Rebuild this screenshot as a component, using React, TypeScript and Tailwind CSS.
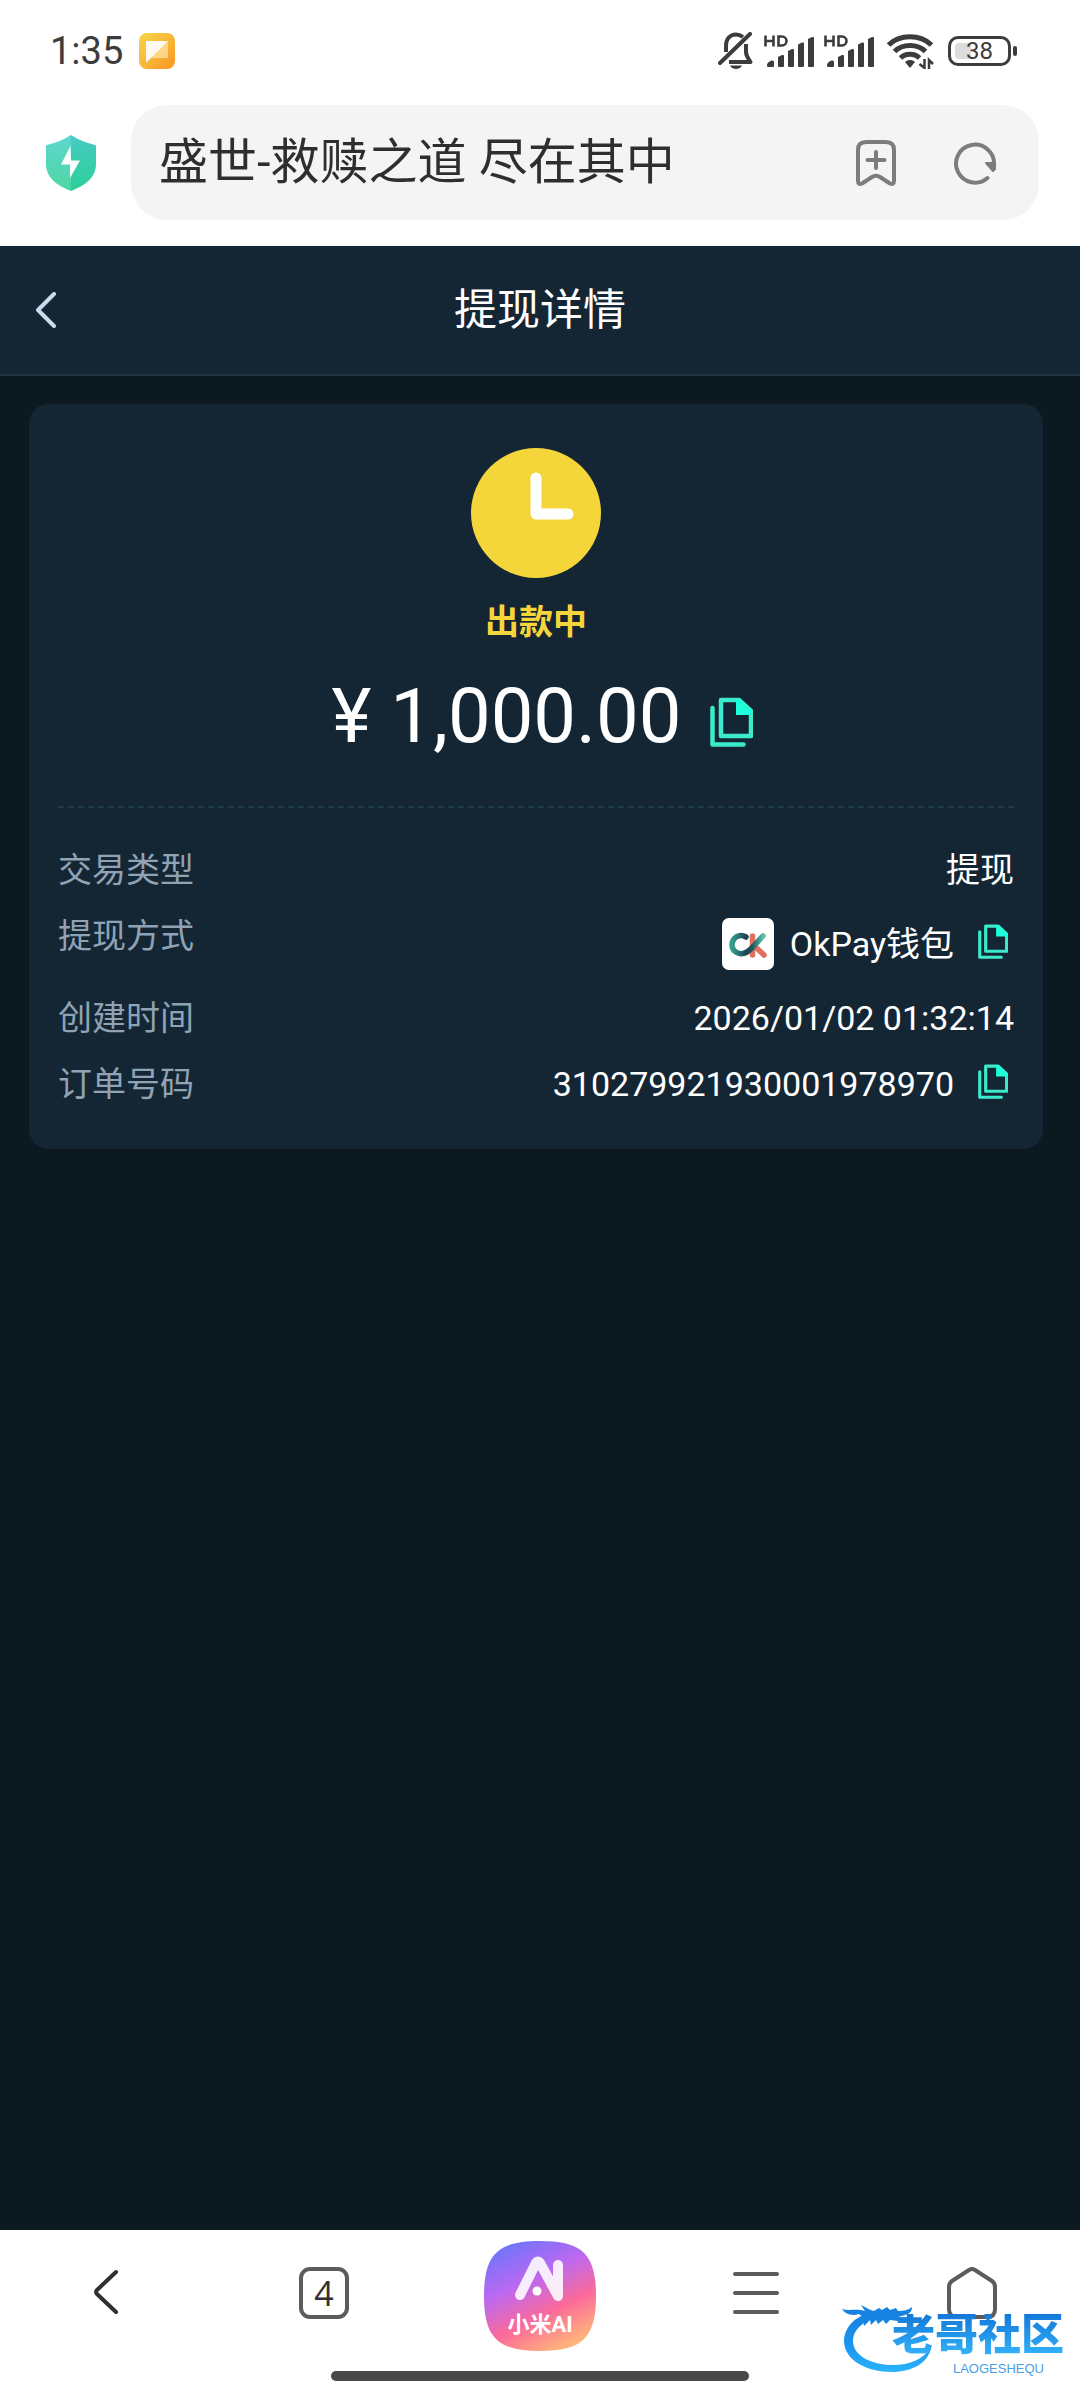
import React, { useState } from "react";

const details = [
  { label: "交易类型", value: "提现" },
  { label: "提现方式", value: "OkPay钱包", wallet: true, copy: true },
  { label: "创建时间", value: "2026/01/02 01:32:14" },
  { label: "订单号码", value: "310279921930001978970", copy: true },
];

function Signal() {
  return (
    <svg className="w-[50px] h-[34px] shrink-0" viewBox="0 0 50 34" fill="#3c3c3c" aria-hidden="true">
      <g fill="none" stroke="#3c3c3c" strokeWidth="2.6">
        <path d="M1.5 1.500v11M9.500 1.500v11M1.500 7h8" />
        <path d="M14.500 2.500v9h3.500a4.500 4.500 0 0 0 0-9z" />
      </g>
      <path d="M3 31c0-2 3-4.500 5.500-4.500q1.500 0 1.500 1.500v4q0 1-1 1H4q-1 0-1-1z" />
      <path d="M14 23l4-2q2-.5 2 1v10q0 1-1 1h-4q-1 0-1-1z" />
      <path d="M24 17l4-2q2-.5 2 1v16q0 1-1 1h-4q-1 0-1-1z" />
      <path d="M34 10.500l4-2q2-.5 2 1V32q0 1-1 1h-4q-1 0-1-1z" />
      <path d="M44 5l4-2q2-.5 2 1v28q0 1-1 1h-4q-1 0-1-1z" />
    </svg>
  );
}

function StatusBar() {
  return (
    <div className="flex items-center justify-between h-[105px] pl-[50px] pr-[63px] pb-1">
      <div className="flex items-center gap-4">
        <span className="text-[38px] leading-[48px] text-[#3c3c3c]">1:35</span>
        <svg className="w-9 h-9" viewBox="0 0 36 36" aria-hidden="true">
          <defs>
            <linearGradient id="note" x1="0" y1="0" x2="1" y2="1">
              <stop offset="0" stopColor="#f5d648" />
              <stop offset=".5" stopColor="#f8b838" />
              <stop offset="1" stopColor="#fa9420" />
            </linearGradient>
          </defs>
          <rect width="36" height="36" rx="8" fill="url(#note)" />
          <path d="M7 8h22v17H13z" fill="#fde0a0" opacity=".75" />
          <path d="M7 8h22L7 30z" fill="#fffaf0" />
        </svg>
      </div>
      <div className="flex items-center gap-[10px]">
        <svg className="w-9 h-[37px]" viewBox="0 0 36 37" fill="none" stroke="#3c3c3c" strokeWidth="4" aria-hidden="true">
          <path d="M8 20v-6C8 7 12 2.500 18 2.500c3 0 5 1 7 2.500M28 12v8c0 4 2 6 4.500 10H11" strokeLinejoin="round" />
          <path d="M2 31L32 2" strokeLinecap="round" />
          <path d="M12 33.500h12c-1.500 4.500-10.500 4.500-12 0z" fill="#3c3c3c" stroke="none" />
        </svg>
        <Signal />
        <Signal />
        <svg className="w-[50px] h-9" viewBox="0 0 50 36" fill="none" stroke="#3c3c3c" aria-hidden="true">
          <g strokeWidth="5">
            <path d="M4.500 12c11-11 32-11 43 0" />
            <path d="M10.500 18.500c8-8 23-8 31 0" />
            <path d="M16.500 25c5-5 14-5 19 0" />
          </g>
          <path d="M26 27c3 0 5 2 5 2l-5 6-5-6s2-2 5-2z" fill="#3c3c3c" stroke="none" />
          <path d="M40.500 26v9l-5-4M45 36v-9l4 4" strokeWidth="2.500" />
        </svg>
        <div className="flex items-center gap-[2px] pl-1">
          <div className="relative flex items-center justify-center w-[63px] h-[30px] rounded-[10px] border-[3px] border-[#3c3c3c]">
            <span className="absolute left-1 inset-y-1 w-4 rounded-sm bg-[#dcdcdc]" />
            <span className="relative text-[24px] leading-6 text-[#3c3c3c]">38</span>
          </div>
          <span className="w-1 h-[10px] rounded-sm bg-[#3c3c3c]" />
        </div>
      </div>
    </div>
  );
}

function AddressBar() {
  const [title, setTitle] = useState("盛世-救赎之道 尽在其中");
  return (
    <div className="flex items-center gap-[35px] pl-[46px] pr-[41px] pb-[26px]">
      <svg className="w-[50px] h-14 shrink-0" viewBox="0 0 50 56" aria-label="安全">
        <defs>
          <linearGradient id="shield" x1="0" y1="0" x2="0" y2="1">
            <stop offset="0" stopColor="#5dd6cf" />
            <stop offset="1" stopColor="#4fd7a3" />
          </linearGradient>
          <linearGradient id="shieldDark" x1="0" y1="0" x2="0" y2="1">
            <stop offset="0" stopColor="#47cbc3" />
            <stop offset="1" stopColor="#2dcf98" />
          </linearGradient>
        </defs>
        <path d="M25 0C17 5 9 8 1 10q-1 0-1 1v18c0 14 12 22 25 27z" fill="url(#shield)" />
        <path d="M25 0c8 5 16 8 24 10q1 0 1 1v18c0 14-12 22-25 27z" fill="url(#shieldDark)" />
        <path d="M24.500 11L15 29.500h9V43l10-17.500h-9z" fill="#fff" />
      </svg>
      <div className="flex flex-1 items-center h-[115px] rounded-[36px] bg-[#f4f4f4] pl-7 pr-[42px]">
        <input type="text" aria-label="网址" value={title} onChange={(e) => setTitle(e.target.value)}
          className="flex-1 min-w-0 bg-transparent text-[49px] leading-[64px] text-[#2e2e2e] focus:outline-none" />
        <button aria-label="收藏" className="mr-14">
          <svg className="w-[42px] h-[46px]" viewBox="0 0 42 46" fill="none" stroke="#7c7c7c" strokeWidth="4" strokeLinecap="round" strokeLinejoin="round">
            <path d="M3 10q0-8 8-8h20q8 0 8 8v31q0 4-4 2.500l-10-6.500q-4-2.500-8 0L7 43.500Q3 45 3 41z" />
            <path d="M21 12v16M12.500 20h17" />
          </svg>
        </button>
        <button aria-label="刷新">
          <svg className="w-[44px] h-[44px]" viewBox="0 0 44 44" fill="none" stroke="#7c7c7c" strokeWidth="4">
            <path d="M34.500 37A19 19 0 1 1 41 24" strokeLinecap="round" />
            <path d="M33 22h9v6l-2 2z" fill="#7c7c7c" strokeWidth="2" strokeLinejoin="round" />
          </svg>
        </button>
      </div>
    </div>
  );
}

function CopyButton({ size }: { size: string }) {
  return (
    <button aria-label="复制" className="shrink-0">
      <svg className={size} viewBox="0 0 43 50" fill="none" stroke="#3cebcb" strokeWidth="4.5" strokeLinejoin="round">
        <path d="M11 3h18l12 11v25H11z" />
        <path d="M2.500 11v36.500h31" strokeLinecap="round" />
        <path d="M26 2h4l12 11v5H26z" fill="#1effdc" stroke="none" />
      </svg>
    </button>
  );
}

function WalletLogo() {
  return (
    <svg className="w-[52px] h-[52px] shrink-0" viewBox="0 0 52 52" aria-hidden="true">
      <defs>
        <linearGradient id="ck" x1="0" y1="0" x2="1" y2="0">
          <stop offset="0" stopColor="#35a08c" />
          <stop offset=".45" stopColor="#1b4257" />
          <stop offset=".65" stopColor="#1f5560" />
          <stop offset="1" stopColor="#5cc0a8" />
        </linearGradient>
      </defs>
      <rect width="52" height="52" rx="7" fill="#fff" />
      <g fill="none" strokeWidth="5.500" strokeLinecap="round">
        <path d="M30.500 18v19M33 28.500l9 8.500" stroke="#e0705d" />
        <path d="M24 19c-7-4-14 1-14 8s8 11 15 7c5-3 11-11 16-16" stroke="url(#ck)" />
      </g>
    </svg>
  );
}

function DetailCard() {
  return (
    <section className="ml-[29px] mr-[37px] mt-7 px-[29px] pt-11 pb-10 rounded-[20px] bg-[#142634]">
      <div className="flex flex-col items-center">
        <svg className="w-[130px] h-[130px]" viewBox="0 0 130 130" aria-hidden="true">
          <circle cx="65" cy="65" r="65" fill="#f4d63a" />
          <path d="M65 30v36h32" fill="none" stroke="#fff" strokeWidth="11" strokeLinecap="round" strokeLinejoin="round" />
        </svg>
        <p className="mt-5 text-[34px] leading-[48px] font-bold text-[#f4d63a]">出款中</p>
        <div className="flex items-center gap-7 mt-[26px] ml-3">
          <p className="text-[76px] leading-[88px] text-white">¥ 1,000.00</p>
          <CopyButton size="w-[43px] h-[50px] mt-3" />
        </div>
      </div>
      <dl className="flex flex-col gap-4 mt-[46px] pt-[37px] border-t-2 border-dashed border-[#1f3c4b]">
        {details.map((d) => (
          <div key={d.label} className="flex items-start justify-between">
            <dt className="text-[34px] leading-[50px] text-[#8fa3b5]">{d.label}</dt>
            <dd className={`flex items-center text-[34px] leading-[50px] text-white ${d.wallet ? "h-[66px]" : ""}`}>
              {d.wallet && <span className="mr-4"><WalletLogo /></span>}
              <span>{d.value}</span>
              {d.copy && <span className="flex ml-6 mr-1.5 pb-1.5"><CopyButton size="w-[30px] h-[35px]" /></span>}
            </dd>
          </div>
        ))}
      </dl>
    </section>
  );
}

function Watermark() {
  return (
    <div className="absolute right-[16px] bottom-[24px] flex flex-col items-end w-[220px] h-[74px] pointer-events-none">
      <svg className="absolute inset-0 w-[220px] h-[74px] overflow-visible" viewBox="0 0 220 74" aria-hidden="true">
        <defs>
          <linearGradient id="dragon" x1="0" y1="0" x2="0" y2="1">
            <stop offset="0" stopColor="#1680e0" />
            <stop offset=".6" stopColor="#1b98f2" />
            <stop offset="1" stopColor="#29b4fa" />
          </linearGradient>
        </defs>
        <path d="M29 10C10 14 0 26 0 40c1 18 22 30 48 30 20 0 36-9 39-24-8 11-21 17-38 17C26 63 9 53 9 39c0-11 9-19 24-24z" fill="url(#dragon)" />
        <path d="M-2 7c6 2 12 0 18 1 3 0 4 1 5 1l-4-6c5 2 8 5 13 6l5-3 3 2 5-3 3 3 6-2 2 3c6 0 10-1 14-4 0 5-3 7-7 8l-7 2c6 1 10 0 15 1-1 4-4 5-8 5l-7-2-8-1-4 4-3-4-5 4-2-4-5 5-1-5-6 6c-1-4 0-6 2-9-3 0-5-1-7-3-6 2-13 1-17-5z" fill="#1683e2" />
      </svg>
      <span className="relative text-[43px] leading-[43px] mt-3 font-black bg-linear-to-b from-[#1478d8] to-[#35b5fa] bg-clip-text text-transparent">老哥社区</span>
      <span className="relative mr-5 mt-1.5 font-['Liberation_Sans'] text-[13px] leading-3 text-[#4a9fe6]">LAOGESHEQU</span>
    </div>
  );
}

function BottomBar() {
  return (
    <nav className="relative bg-white pt-[11px] pb-[19px]">
      <div className="grid grid-cols-5 items-center justify-items-center h-[110px]">
        <button aria-label="后退" className="mb-1.5">
          <svg className="w-7 h-[50px]" viewBox="0 0 28 50" fill="none" stroke="#303030" strokeWidth="4" strokeLinecap="round" strokeLinejoin="round">
            <path d="M22 4L3 22q-2 2 0 4l19 18" />
          </svg>
        </button>
        <button aria-label="标签页" className="mb-1.5 w-[50px] h-[52px] rounded-[11px] border-4 border-[#5c5c5c] font-['Open_Sans'] text-[34px] leading-[44px] text-[#303030]">4</button>
        <button aria-label="小米AI">
          <svg className="w-28 h-[110px]" viewBox="0 0 112 110">
            <defs>
              <linearGradient id="ai" x1="0.25" y1="0" x2="0.75" y2="1">
                <stop offset="0" stopColor="#6f74fb" />
                <stop offset=".35" stopColor="#bd68f0" />
                <stop offset=".65" stopColor="#fb6a9a" />
                <stop offset="1" stopColor="#ffbd78" />
              </linearGradient>
            </defs>
            <path d="M56 0c42 0 56 13 56 55s-14 55-56 55S0 97 0 55 14 0 56 0z" fill="url(#ai)" />
            <path d="M36 54l16-32q2-3 4 0l18 33V24" fill="none" stroke="#fff" strokeWidth="10" strokeLinecap="round" strokeLinejoin="round" opacity=".88" />
            <circle cx="53" cy="50" r="4.500" fill="#fff" />
            <text x="56" y="91" textAnchor="middle" fontSize="22" fontWeight="700" fill="#fff">小米AI</text>
          </svg>
        </button>
        <button aria-label="菜单" className="mb-1.5">
          <svg className="w-[46px] h-[42px]" viewBox="0 0 46 42" stroke="#5c5c5c" strokeWidth="4" strokeLinecap="round">
            <path d="M2 2h42M2 21h42M2 40h42" />
          </svg>
        </button>
        <button aria-label="主页" className="mb-1.5">
          <svg className="w-[50px] h-[52px]" viewBox="0 0 50 52" fill="none" stroke="#5c5c5c" strokeWidth="4" strokeLinejoin="round">
            <path d="M22 3q3-2 6 0l17 11q3 2 3 6v22q0 8-8 8H10q-8 0-8-8V20q0-4 3-6z" />
          </svg>
        </button>
      </div>
      <div className="mx-auto mt-5 w-[418px] h-[10px] rounded-full bg-[#484848]" />
      <Watermark />
    </nav>
  );
}

export default function App() {
  return (
    <div className="flex flex-col min-h-screen bg-[#0c1921] font-['Roboto','Noto_Sans_CJK_SC',sans-serif]">
      <div className="bg-white">
        <StatusBar />
        <AddressBar />
      </div>
      <header className="grid grid-cols-[1fr_auto_1fr] items-center h-[130px] px-9 bg-[#142634] border-b-2 border-[#213444]">
        <button aria-label="返回" className="justify-self-start">
          <svg className="w-5 h-9" viewBox="0 0 20 36" fill="none" stroke="#c8dcf0" strokeWidth="4" strokeLinecap="round" strokeLinejoin="round">
            <path d="M18 2L2 18l16 16" />
          </svg>
        </button>
        <h1 className="text-[43px] leading-[60px] text-white">提现详情</h1>
      </header>
      <main className="flex-1">
        <DetailCard />
      </main>
      <BottomBar />
    </div>
  );
}
